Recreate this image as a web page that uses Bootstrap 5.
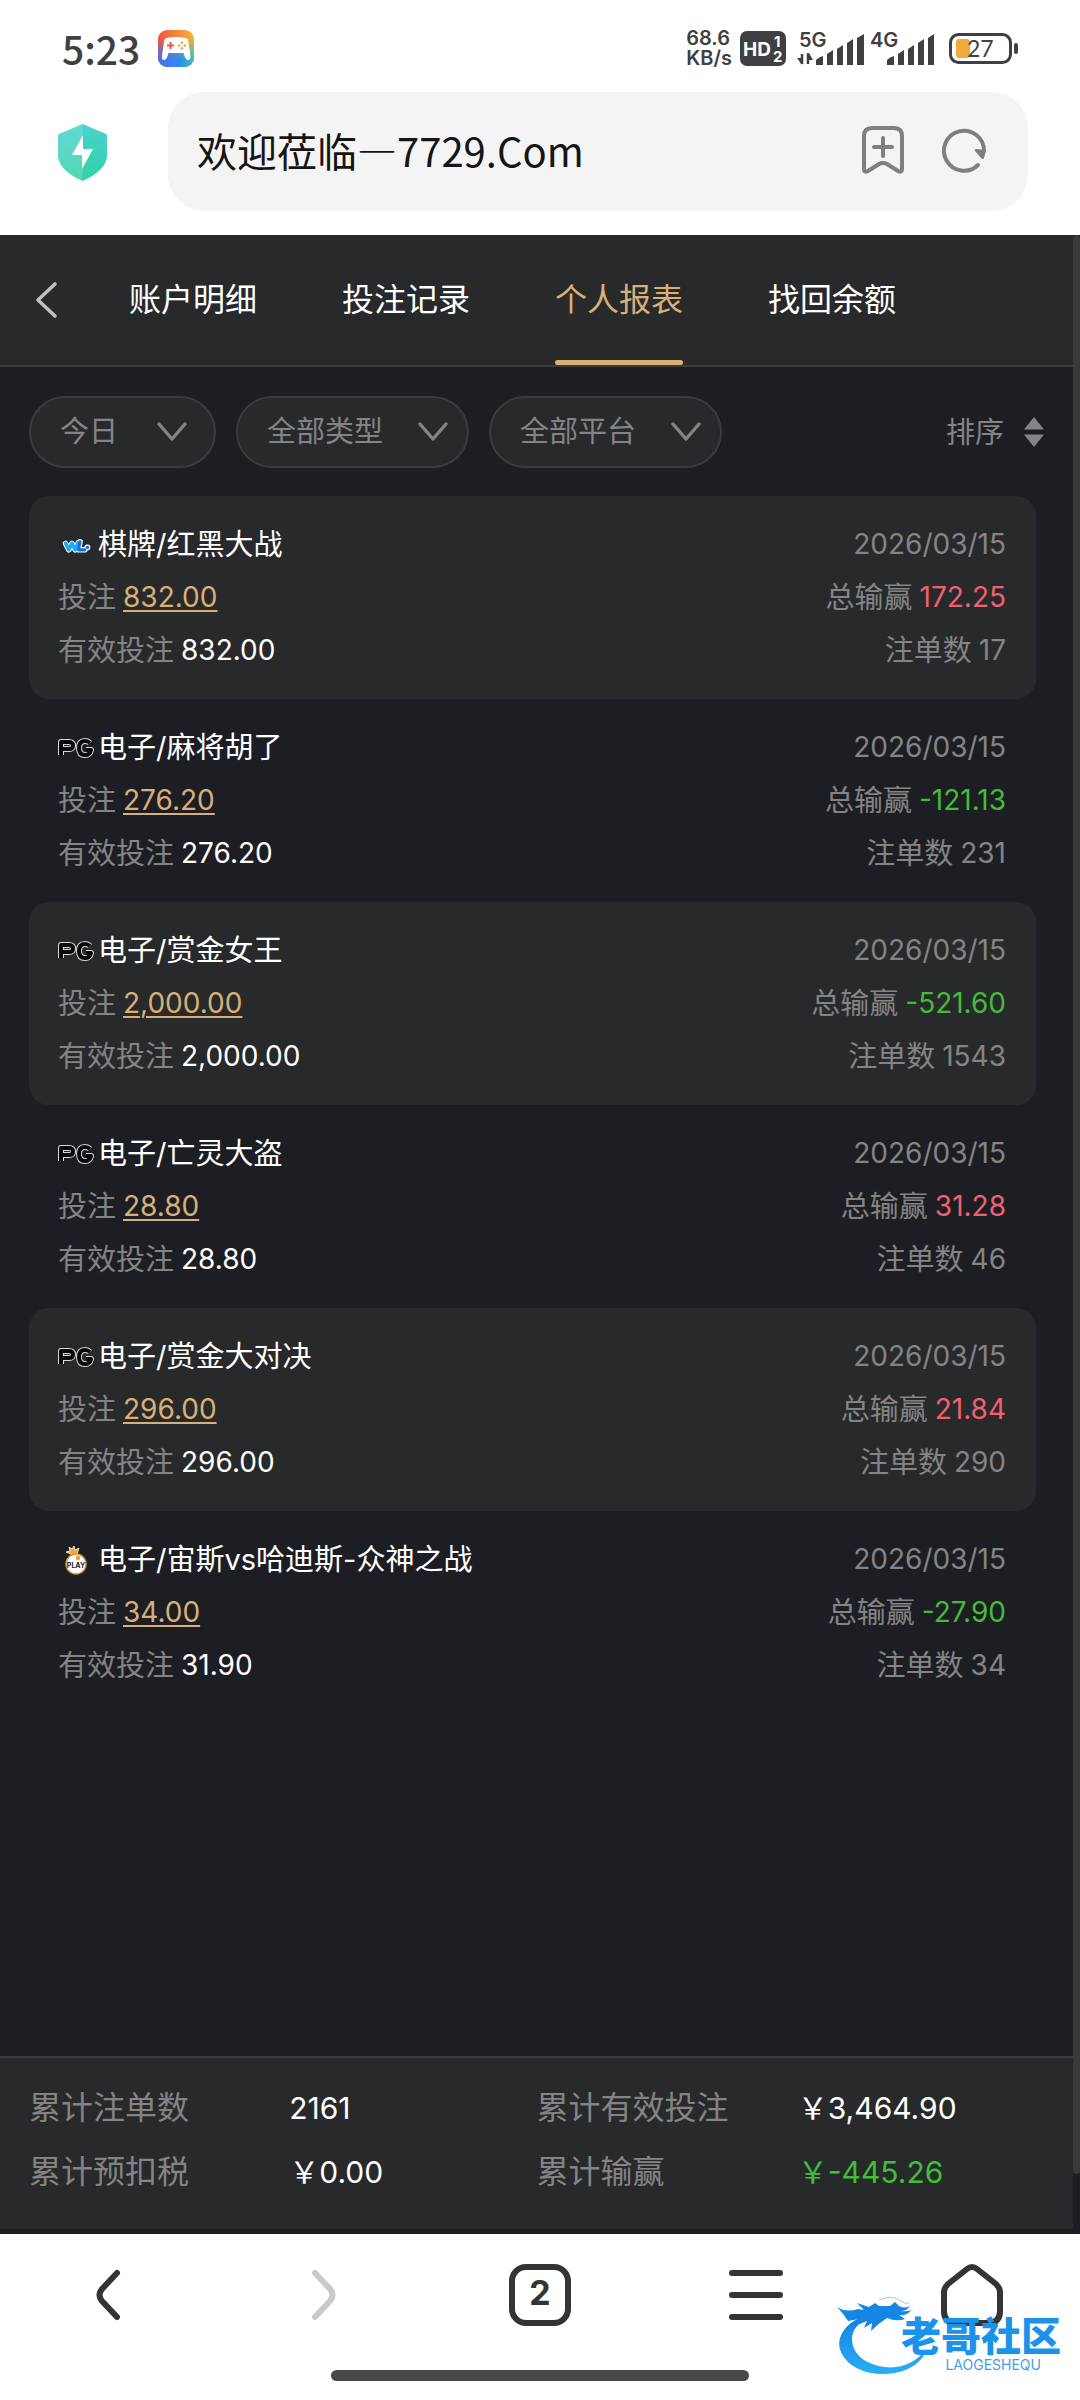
<!DOCTYPE html>
<html lang="zh-CN">
<head>
<meta charset="utf-8">
<meta name="viewport" content="width=device-width, initial-scale=1">
<title>个人报表</title>
<link href="https://cdn.jsdelivr.net/npm/bootstrap@5.3.0/dist/css/bootstrap.min.css" rel="stylesheet">
<style>
  :root { --ink:#1d1e23; --panel:#28292b; --line:#3a3b3d; --dim:#848484; --gold:#d8b077; --gain:#f1606f; --loss:#41bd38; }
  body { font-family: Inter, "Noto Sans CJK SC", sans-serif; background: var(--ink); font-size: 29px; line-height: 53px; color: #fff; }
  svg { display: block; flex: none; overflow: visible; }
  button { background: none; border: 0; padding: 0; color: inherit; }

  .phone-status { height: 92px; padding: 4px 61px 0 62px; color: #404040; }
  .clock { font-family: "Noto Sans CJK SC", sans-serif; font-size: 39px; font-weight: 500; line-height: 48px; }
  .app-badge { margin-left: 18px; }
  .net-speed { font-size: 20px; line-height: 20px; font-weight: 600; }
  .sig-main { margin-left: 11px; }
  .sig-alt { margin-left: 6px; }
  .battery { margin-left: 14px; }
  .addr-row { padding: 0 52px 24px 58px; }
  .addr-box { height: 119px; border-radius: 36px; background: #f4f4f4; margin-left: 61px; padding: 0 41px 4px 29px; color: #7f7f7f; }
  .addr-box .form-control { font-family: "Noto Sans CJK SC", sans-serif; font-size: 40px; line-height: 60px; color: #151515; }
  .reload-btn { margin-left: 39px; }

  .tab-bar { height: 132px; background: var(--panel); border-bottom: 2px solid var(--line); padding-left: 35px; }
  .tab-bar .back-btn { width: 24px; margin-right: 70px; color: #bfc0c2; }
  .tab-bar .nav { gap: 85px; }
  .tab-bar .nav-link { font-size: 32px; line-height: 48px; padding: 41px 0 36px; color: #fff; border-bottom: 5px solid transparent; position: relative; }
  .tab-bar .nav-link.active { color: var(--gold); }
  .tab-bar .nav-link.active::after { content: ""; position: absolute; left: 0; right: 0; bottom: -5px; height: 5px; border-radius: 3px; background: var(--gold); }

  .filter-row { padding: 29px 29px 28px; color: var(--dim); gap: 20px; }
  .pill-select { position: relative; }
  .pill-select select { appearance: none; width: 233px; height: 72px; border: 2px solid var(--line); border-radius: 36px; background: var(--panel); color: var(--dim); padding: 0 0 0 29px; font-size: 29px; line-height: 44px; }
  .pill-select.narrow select { width: 187px; }
  .pill-select svg { position: absolute; right: 21px; top: 26px; pointer-events: none; }
  .pill-select.narrow svg { right: 29px; }

  .bet-list { padding: 0 37px 0 29px; }
  .bet-item { padding: 22px 30px 22px 29px; border-radius: 20px; color: var(--dim); }
  .bet-item:nth-child(odd) { background: var(--panel); }
  .bet-item .title-line { color: #fff; gap: 4px; }
  .pair { display: flex; gap: 7px; }
  .fig { font-size: 28px; color: #fff; }
  .fig.plain { color: inherit; }
  a.fig { color: var(--gold); text-decoration: underline; text-decoration-thickness: 2px; text-underline-offset: 3px; }
  .fig.gain { color: var(--gain); }
  .fig.loss { color: var(--loss); }

  .totals { background: var(--panel); border-top: 2px solid var(--line); padding: 18px 30px 25px 29px; margin-bottom: 5px; display: grid; grid-template-columns: 260fr 247fr 261fr 245fr; font-size: 32px; line-height: 64px; color: var(--dim); }
  .totals dt, .totals dd { font-weight: 400; margin: 0; white-space: nowrap; }
  .totals dd { font-size: 30px; color: #fff; }
  .totals dd.loss { color: var(--loss); }

  .scroll-track { width: 7px; flex: none; }
  .scroll-thumb { height: 97%; background: #38393b; border-radius: 4px; }

  .browser-nav { padding-top: 30px; color: #343434; }
  .browser-nav button { flex: 1 1 0; display: flex; justify-content: center; height: 62px; align-items: center; }
  .gesture-bar { width: 418px; height: 11px; border-radius: 6px; background: #484848; margin: 44px auto 19px; }
  .site-mark { position: absolute; right: 19px; top: 62px; width: 224px; height: 80px; }
  .mark-name { position: absolute; right: 0; top: 18px; width: 182px; font-family: "Noto Sans CJK SC", sans-serif; font-size: 40px; line-height: 40px; font-weight: 900; color: #1c93ea; display: flex; justify-content: flex-end; }
  .mark-latin { position: absolute; right: 20px; top: 62px; font-size: 14px; line-height: 14px; color: #3f9fe6; }
</style>
</head>
<body>
<svg class="d-none" aria-hidden="true">
  <symbol id="chev" viewBox="0 0 30 20"><path d="M2 2 15 17 28 2" fill="none" stroke="#848484" stroke-width="3.4" stroke-linecap="round" stroke-linejoin="round"/></symbol>
  <symbol id="pg" viewBox="0 0 36 20">
    <g fill="none" stroke-linejoin="round">
      <g stroke="#d9d9de" stroke-width="6"><path d="M3 17V4h8q4 0 4 3.500t-4 3.500H5"/><path d="M32 5q-2-2-5-2-6 0-6 7t6 7q5 0 6-5h-5"/></g>
      <g stroke="#08080a" stroke-width="4"><path d="M3 17V4h8q4 0 4 3.500t-4 3.500H5"/><path d="M32 5q-2-2-5-2-6 0-6 7t6 7q5 0 6-5h-5"/></g>
    </g>
  </symbol>
</svg>
<div class="d-flex flex-column min-vh-100">

  <header class="bg-white">
    <div class="phone-status d-flex align-items-center">
      <span class="clock">5:23</span>
      <svg class="app-badge" width="36" height="37" viewBox="0 0 36 37">
        <defs>
          <linearGradient id="ga" x1="0" y1="0" x2="1" y2="0"><stop offset="0" stop-color="#f0553f"/><stop offset="1" stop-color="#f8b53a"/></linearGradient>
          <linearGradient id="gb" x1="0" y1="0" x2="1" y2="0"><stop offset="0" stop-color="#4a6fe8"/><stop offset=".6" stop-color="#2f8df0"/><stop offset="1" stop-color="#3fc3b4"/></linearGradient>
          <linearGradient id="gm" x1="0" y1="0" x2="0" y2="1"><stop offset=".25" stop-color="#fff" stop-opacity="0"/><stop offset=".75" stop-color="#fff"/></linearGradient>
          <mask id="mk"><rect width="36" height="37" fill="url(#gm)"/></mask>
        </defs>
        <rect width="36" height="37" rx="9" fill="url(#ga)"/>
        <rect width="36" height="37" rx="9" fill="url(#gb)" mask="url(#mk)"/>
        <path d="M9 8q9-2 18 0 3 0 3.500 4l2 14q0 4-2.500 4-2 0-3.500-4l-1-3h-15l-1 3q-1.500 4-3.500 4-2.500 0-2-4l2-14Q6.500 8 9 8Z" fill="#fff"/>
        <path d="M9 15.500h7M12.500 12v7" stroke="#e8603f" stroke-width="2.200"/>
        <g fill="#f0a23c"><circle cx="24" cy="12.700" r="1.300"/><circle cx="24" cy="18.300" r="1.300"/><circle cx="21.200" cy="15.500" r="1.300"/><circle cx="26.800" cy="15.500" r="1.300"/></g>
      </svg>
      <div class="net-speed ms-auto"><div>68.6</div><div>KB/s</div></div>
      <svg class="ms-2" width="46" height="35" viewBox="0 0 46 35" font-family="Inter, sans-serif" font-weight="700" fill="#fff">
        <rect width="46" height="35" rx="7" fill="#404040"/>
        <text x="3" y="25" font-size="19">HD</text><text x="34" y="16" font-size="15">1</text><text x="33" y="31" font-size="15">2</text>
      </svg>
      <svg class="sig-main" width="67" height="35" viewBox="0 0 67 35" fill="#404040">
        <text x="2" y="16" font-family="Inter, sans-serif" font-weight="600" font-size="20">5G</text>
        <path d="M5 23v10M11 33V23" stroke="#404040" stroke-width="2.500"/><path d="M0 27h5v7ZM10 22h2l4 7h-6Z"/>
        <path d="M19 34v-5q3-3 7-4v9ZM30 34V23l6-4v15ZM40 34V18l6-4v20ZM50 34V12l6-4v26ZM60 34V7l7-4v31Z"/>
      </svg>
      <svg class="sig-alt" width="65" height="35" viewBox="0 0 65 35" fill="#404040">
        <text x="0" y="16" font-family="Inter, sans-serif" font-weight="600" font-size="20">4G</text>
        <path d="M17 34v-5q3-3 7-4v9ZM28 34V23l6-4v15ZM38 34V18l6-4v20ZM48 34V12l6-4v26ZM58 34V7l6-4v31Z"/>
      </svg>
      <svg class="battery" width="70" height="31" viewBox="0 0 70 31">
        <rect x="1.500" y="1.500" width="60" height="28" rx="8" fill="none" stroke="#404040" stroke-width="3"/>
        <rect x="7" y="6" width="14" height="19" rx="3" fill="#f3aa3a"/><rect x="65" y="10" width="4" height="11" rx="2" fill="#404040"/>
        <text x="18" y="24" font-family="Lato, sans-serif" font-size="23" fill="#404040">27</text>
      </svg>
    </div>
    <div class="addr-row d-flex align-items-center">
      <svg width="49" height="58" viewBox="0 0 49 58">
        <defs><linearGradient id="sh" x1="0" y1="0" x2="0" y2="1"><stop offset="0" stop-color="#48d3cd"/><stop offset="1" stop-color="#32d2a5"/></linearGradient></defs>
        <path d="M24.500 1 48 11q1 0 1 2v21q-2 14-24.500 24Q2 48 0 34V13q0-2 1-2Z" fill="url(#sh)"/>
        <path d="M24.500 1v57Q2 48 0 34V13q0-2 1-2Z" fill="#fff" opacity=".15"/>
        <path d="M25 12 14 32h10v14l11-20H25Z" fill="#fff"/>
      </svg>
      <div class="addr-box d-flex align-items-center flex-grow-1">
        <input class="form-control border-0 bg-transparent p-0 shadow-none" type="text" aria-label="网址" value="欢迎莅临—7729.Com">
        <button type="button" aria-label="收藏"><svg width="42" height="48" viewBox="0 0 42 48" fill="none" stroke="#7f7f7f" stroke-width="4" stroke-linecap="round" stroke-linejoin="round"><path d="M10 2h22q8 0 8 8v33q0 4-4 2l-11-7q-4-2-8 0L6 45q-4 2-4-2V10q0-8 8-8ZM21 12v18M12 21h18"/></svg></button>
        <button class="reload-btn" type="button" aria-label="刷新"><svg width="44" height="44" viewBox="0 0 44 44"><path d="M35 37A20 20 0 1 1 41 23" fill="none" stroke="#7f7f7f" stroke-width="4" stroke-linecap="round"/><path d="M32 23q-1-2 1-2l10 1-2 8q-1 2-3 0Z" fill="#7f7f7f"/></svg></button>
      </div>
    </div>
  </header>

  <div class="d-flex flex-grow-1 align-items-stretch">
    <main class="d-flex flex-column flex-grow-1">
      <div class="tab-bar d-flex align-items-center">
        <button class="back-btn" type="button" aria-label="返回"><svg width="22" height="36" viewBox="0 0 22 36"><path d="M20 2 3 18 20 34" fill="none" stroke="currentColor" stroke-width="3.600" stroke-linecap="round" stroke-linejoin="round"/></svg></button>
        <nav class="nav flex-nowrap">
          <a class="nav-link" href="#">账户明细</a>
          <a class="nav-link" href="#">投注记录</a>
          <a class="nav-link active" aria-current="page" href="#">个人报表</a>
          <a class="nav-link" href="#">找回余额</a>
        </nav>
      </div>

      <div class="filter-row d-flex align-items-center">
        <div class="pill-select narrow"><select aria-label="日期"><option>今日</option></select><svg width="30" height="20"><use href="#chev"/></svg></div>
        <div class="pill-select"><select aria-label="类型"><option>全部类型</option></select><svg width="30" height="20"><use href="#chev"/></svg></div>
        <div class="pill-select"><select aria-label="平台"><option>全部平台</option></select><svg width="30" height="20"><use href="#chev"/></svg></div>
        <button type="button" class="d-flex align-items-center ms-auto gap-3">排序 <svg class="ms-1" width="20" height="30" viewBox="0 0 20 30" fill="#848484"><path d="M10 0 20 12.500H0ZM10 30 0 17.500h20Z"/></svg></button>
      </div>

      <div class="bet-list flex-grow-1">
        <article class="bet-item">
          <div class="d-flex justify-content-between"><div class="title-line d-flex align-items-center">
            <svg width="36" height="16" viewBox="0 0 36 20" fill="none" stroke-linecap="round" stroke-linejoin="round"><path d="M5 8 9 16 13 8l4 8 4-9M23 6l-2 10h8M32 13h.5" stroke="#fff" stroke-width="7"/><path d="M5 8 9 16 13 8l4 8 4-9" stroke="#18aef5" stroke-width="4.500"/><path d="M23 6l-2 10h8M32 13h.5" stroke="#156fe0" stroke-width="4"/></svg>
            棋牌/红黑大战</div><time class="fig plain">2026/03/15</time></div>
          <div class="d-flex justify-content-between"><div class="pair">投注 <a class="fig" href="#">832.00</a></div><div class="pair">总输赢 <span class="fig gain">172.25</span></div></div>
          <div class="d-flex justify-content-between"><div class="pair">有效投注 <span class="fig">832.00</span></div><div class="pair">注单数 <span class="fig plain">17</span></div></div>
        </article>
        <article class="bet-item">
          <div class="d-flex justify-content-between"><div class="title-line d-flex align-items-center"><svg width="36" height="20"><use href="#pg"/></svg>电子/麻将胡了</div><time class="fig plain">2026/03/15</time></div>
          <div class="d-flex justify-content-between"><div class="pair">投注 <a class="fig" href="#">276.20</a></div><div class="pair">总输赢 <span class="fig loss">-121.13</span></div></div>
          <div class="d-flex justify-content-between"><div class="pair">有效投注 <span class="fig">276.20</span></div><div class="pair">注单数 <span class="fig plain">231</span></div></div>
        </article>
        <article class="bet-item">
          <div class="d-flex justify-content-between"><div class="title-line d-flex align-items-center"><svg width="36" height="20"><use href="#pg"/></svg>电子/赏金女王</div><time class="fig plain">2026/03/15</time></div>
          <div class="d-flex justify-content-between"><div class="pair">投注 <a class="fig" href="#">2,000.00</a></div><div class="pair">总输赢 <span class="fig loss">-521.60</span></div></div>
          <div class="d-flex justify-content-between"><div class="pair">有效投注 <span class="fig">2,000.00</span></div><div class="pair">注单数 <span class="fig plain">1543</span></div></div>
        </article>
        <article class="bet-item">
          <div class="d-flex justify-content-between"><div class="title-line d-flex align-items-center"><svg width="36" height="20"><use href="#pg"/></svg>电子/亡灵大盗</div><time class="fig plain">2026/03/15</time></div>
          <div class="d-flex justify-content-between"><div class="pair">投注 <a class="fig" href="#">28.80</a></div><div class="pair">总输赢 <span class="fig gain">31.28</span></div></div>
          <div class="d-flex justify-content-between"><div class="pair">有效投注 <span class="fig">28.80</span></div><div class="pair">注单数 <span class="fig plain">46</span></div></div>
        </article>
        <article class="bet-item">
          <div class="d-flex justify-content-between"><div class="title-line d-flex align-items-center"><svg width="36" height="20"><use href="#pg"/></svg>电子/赏金大对决</div><time class="fig plain">2026/03/15</time></div>
          <div class="d-flex justify-content-between"><div class="pair">投注 <a class="fig" href="#">296.00</a></div><div class="pair">总输赢 <span class="fig gain">21.84</span></div></div>
          <div class="d-flex justify-content-between"><div class="pair">有效投注 <span class="fig">296.00</span></div><div class="pair">注单数 <span class="fig plain">290</span></div></div>
        </article>
        <article class="bet-item">
          <div class="d-flex justify-content-between"><div class="title-line d-flex align-items-center">
            <svg width="36" height="28" viewBox="0 0 36 28"><path d="M15 9 8 6l4-1-1-4 3 2 2-3 1 4 4-2-2 6Z" fill="#f3a83a" stroke="#fff" stroke-width=".8"/><circle cx="18" cy="18" r="10" fill="#fff" stroke="#d99a3c" stroke-width="1.500"/><circle cx="20" cy="12" r="2.200" fill="#f0a030"/><text x="18" y="22" font-family="Inter, sans-serif" font-weight="700" font-size="7" text-anchor="middle" fill="#222">PLAY</text></svg>
            电子/宙斯vs哈迪斯-众神之战</div><time class="fig plain">2026/03/15</time></div>
          <div class="d-flex justify-content-between"><div class="pair">投注 <a class="fig" href="#">34.00</a></div><div class="pair">总输赢 <span class="fig loss">-27.90</span></div></div>
          <div class="d-flex justify-content-between"><div class="pair">有效投注 <span class="fig">31.90</span></div><div class="pair">注单数 <span class="fig plain">34</span></div></div>
        </article>
      </div>

      <dl class="totals">
        <dt>累计注单数</dt><dd>2161</dd><dt>累计有效投注</dt><dd>￥3,464.90</dd>
        <dt>累计预扣税</dt><dd>￥0.00</dd><dt>累计输赢</dt><dd class="loss">￥-445.26</dd>
      </dl>
    </main>
    <div class="scroll-track"><div class="scroll-thumb"></div></div>
  </div>

  <footer class="bg-white position-relative">
    <div class="browser-nav d-flex">
      <button type="button" aria-label="后退"><svg width="24" height="52" viewBox="0 0 24 52"><path d="M21 4 6 20q-5 6 0 12l15 16" fill="none" stroke="#343434" stroke-width="6" stroke-linecap="round"/></svg></button>
      <button type="button" aria-label="前进" disabled><svg width="24" height="52" viewBox="0 0 24 52"><path d="M3 4 18 20q5 6 0 12L3 48" fill="none" stroke="#cacaca" stroke-width="6" stroke-linecap="round"/></svg></button>
      <button type="button" aria-label="标签页"><svg width="62" height="62" viewBox="0 0 62 62"><rect x="3" y="3" width="56" height="56" rx="14" fill="none" stroke="#343434" stroke-width="6"/><text x="31" y="41" text-anchor="middle" font-family="Inter, sans-serif" font-weight="700" font-size="34" fill="#343434">2</text></svg></button>
      <button type="button" aria-label="菜单"><svg width="54" height="50" viewBox="0 0 54 50"><path d="M3 3h48M3 25h48M3 47h48" stroke="#343434" stroke-width="6" stroke-linecap="round"/></svg></button>
      <button type="button" aria-label="主页"><svg width="62" height="62" viewBox="0 0 62 62"><path d="M26 5q5-4 10 0l19 15q4 4 4 8v19q0 12-12 12H15Q3 59 3 47V28q0-4 4-8Z" fill="none" stroke="#343434" stroke-width="6" stroke-linejoin="round"/></svg></button>
    </div>
    <div class="gesture-bar"></div>
    <div class="site-mark">
      <svg width="224" height="80" viewBox="0 0 224 80">
        <defs><linearGradient id="dr" x1="0" y1="0" x2="0" y2="1"><stop offset="0" stop-color="#1280e0"/><stop offset="1" stop-color="#28b0f6"/></linearGradient></defs>
        <path d="M30 19C8 26-2 42 4 56c8 18 32 25 54 21 16-3 28-12 32-24-12 14-26 20-42 18C30 69 15 59 15 43c0-9 6-17 18-21Z" fill="url(#dr)"/>
        <path d="M0 11q9 6 21 2l6 1-7-7 12 4 6-4 4 3 11 0 5-4 4 4q6 3 11 0-3 5-9 5 6 1 10-1-3 6-12 5l6 4q-9 3-18-1-8 5-16 13l1-8-8 5 3-7-12 5 4-7-11 2Q6 17 0 11Z" fill="#1686e4"/>
        <path d="M42 4q13-6 22 1 5 4 8 2" fill="none" stroke="#9ccdf5" stroke-width="1"/>
      </svg>
      <span class="mark-name">老哥社区</span>
      <span class="mark-latin">LAOGESHEQU</span>
    </div>
  </footer>
</div>
<script src="https://cdn.jsdelivr.net/npm/bootstrap@5.3.0/dist/js/bootstrap.bundle.min.js"></script>
</body>
</html>
